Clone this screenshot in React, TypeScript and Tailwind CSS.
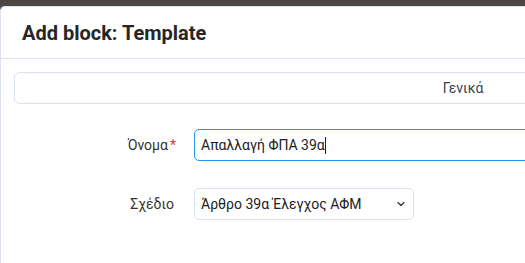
import { ChevronDown } from "lucide-react";

export default function App() {
    return (
        <div className="h-[263px] w-[525px] overflow-hidden bg-[#4b4843] pt-[6px] font-['Roboto',sans-serif]">
            {/* Modal */}
            <div className="w-[926px] h-[300px] bg-white rounded-tl-[5px] border-l border-t border-[#dfe4f0]">
                {/* Header */}
                <div className="h-[52px] px-[21px] flex items-center border-b border-[#dfe4f0]">
                    <h2 className="text-[20px] font-bold text-[#262626]">Add block: Template</h2>
                </div>

                {/* Body */}
                <div className="pl-[13px] pt-[13px]">
                    {/* Tabs */}
                    <div className="h-[32px] w-[898px] border border-[#dbe1ee] rounded-[6px] flex items-center justify-center">
                        <span className="text-[14px] text-[#3b3f4a]">Γενικά</span>
                    </div>

                    {/* Form */}
                    <div className="mt-[25px] flex flex-col gap-[27px]">
                        <div className="flex items-center">
                            <label className="w-[162px] text-right text-[14px] text-[#333]">
                                Όνομα<span className="text-[#e53935] ml-[2px]">*</span>
                            </label>
                            <div className="ml-[18px] h-[32px] w-[500px] border border-[#2196f3] rounded-[5px] flex items-center px-[6px]">
                                <span className="text-[14px] text-[#212121]">Απαλλαγή ΦΠΑ 39α</span>
                                <span className="w-px h-[17px] bg-[#212121]" />
                            </div>
                        </div>
                        <div className="flex items-center">
                            <label className="w-[160px] text-right text-[14px] text-[#333]">Σχέδιο</label>
                            <div className="ml-[20px] h-[32px] w-[220px] border border-[#dbe1ee] rounded-[5px] flex items-center justify-between pl-[6px] pr-[6px]">
                                <span className="text-[14px] text-[#212121]">Άρθρο 39α Έλεγχος ΑΦΜ</span>
                                <ChevronDown className="w-[12px] h-[12px] text-[#333]" strokeWidth={2.5} />
                            </div>
                        </div>
                    </div>
                </div>
            </div>
        </div>
    );
}
